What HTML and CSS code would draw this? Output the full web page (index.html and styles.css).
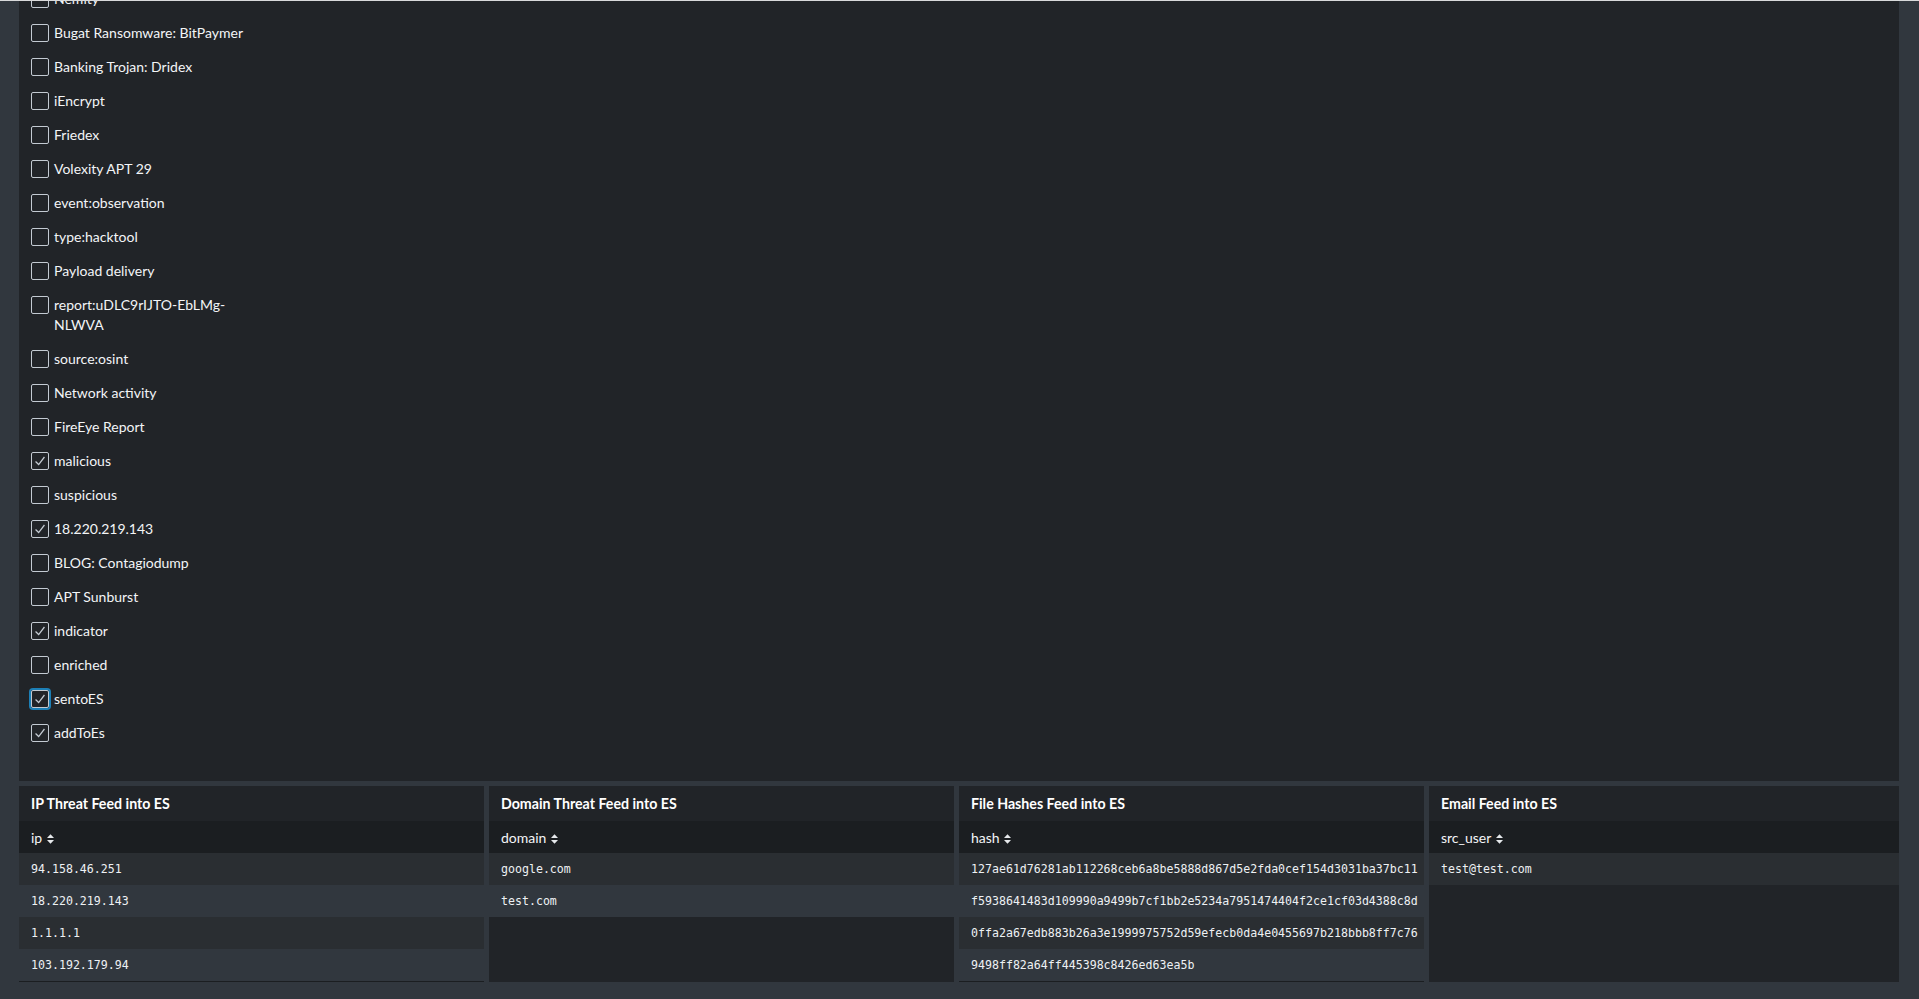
FILE: index.html
```html
<!DOCTYPE html>
<html>
<head>
<meta charset="utf-8">
<link rel="stylesheet" href="styles.css">
</head>
<body>
<div class="topline"></div>
<div class="page">
  <section class="filter-panel">
    <ul class="check-list">
      <li class="item"><span class="box"></span><span class="label">Nemity</span></li>
      <li class="item"><span class="box"></span><span class="label">Bugat Ransomware: BitPaymer</span></li>
      <li class="item"><span class="box"></span><span class="label">Banking Trojan: Dridex</span></li>
      <li class="item"><span class="box"></span><span class="label">iEncrypt</span></li>
      <li class="item"><span class="box"></span><span class="label">Friedex</span></li>
      <li class="item"><span class="box"></span><span class="label">Volexity APT 29</span></li>
      <li class="item"><span class="box"></span><span class="label">event:observation</span></li>
      <li class="item"><span class="box"></span><span class="label">type:hacktool</span></li>
      <li class="item"><span class="box"></span><span class="label">Payload delivery</span></li>
      <li class="item"><span class="box"></span><span class="label">report:uDLC9rIJTO-EbLMg-NLWVA</span></li>
      <li class="item"><span class="box"></span><span class="label">source:osint</span></li>
      <li class="item"><span class="box"></span><span class="label">Network activity</span></li>
      <li class="item"><span class="box"></span><span class="label">FireEye Report</span></li>
      <li class="item"><span class="box checked"><svg viewBox="0 0 18 18"><polyline points="4,9.5 7.5,13 14,4.5"/></svg></span><span class="label">malicious</span></li>
      <li class="item"><span class="box"></span><span class="label">suspicious</span></li>
      <li class="item"><span class="box checked"><svg viewBox="0 0 18 18"><polyline points="4,9.5 7.5,13 14,4.5"/></svg></span><span class="label">18.220.219.143</span></li>
      <li class="item"><span class="box"></span><span class="label">BLOG: Contagiodump</span></li>
      <li class="item"><span class="box"></span><span class="label">APT Sunburst</span></li>
      <li class="item"><span class="box checked"><svg viewBox="0 0 18 18"><polyline points="4,9.5 7.5,13 14,4.5"/></svg></span><span class="label">indicator</span></li>
      <li class="item"><span class="box"></span><span class="label">enriched</span></li>
      <li class="item"><span class="box checked focused"><svg viewBox="0 0 18 18"><polyline points="4,9.5 7.5,13 14,4.5"/></svg></span><span class="label">sentoES</span></li>
      <li class="item"><span class="box checked"><svg viewBox="0 0 18 18"><polyline points="4,9.5 7.5,13 14,4.5"/></svg></span><span class="label">addToEs</span></li>
    </ul>
  </section>

  <section class="tables">
    <div class="table-panel">
      <div class="title">IP Threat Feed into ES</div>
      <table>
        <thead><tr><th>ip <svg class="sort" viewBox="0 0 8 11"><path d="M4 0 L8 4.3 H0 Z M0 6.7 H8 L4 11 Z"/></svg></th></tr></thead>
        <tbody>
          <tr><td>94.158.46.251</td></tr>
          <tr><td>18.220.219.143</td></tr>
          <tr><td>1.1.1.1</td></tr>
          <tr><td>103.192.179.94</td></tr>
        </tbody>
      </table>
    </div>
    <div class="table-panel">
      <div class="title">Domain Threat Feed into ES</div>
      <table>
        <thead><tr><th>domain <svg class="sort" viewBox="0 0 8 11"><path d="M4 0 L8 4.3 H0 Z M0 6.7 H8 L4 11 Z"/></svg></th></tr></thead>
        <tbody class="no-border">
          <tr><td>google.com</td></tr>
          <tr><td>test.com</td></tr>
        </tbody>
      </table>
    </div>
    <div class="table-panel">
      <div class="title">File Hashes Feed into ES</div>
      <table>
        <thead><tr><th>hash <svg class="sort" viewBox="0 0 8 11"><path d="M4 0 L8 4.3 H0 Z M0 6.7 H8 L4 11 Z"/></svg></th></tr></thead>
        <tbody>
          <tr><td>127ae61d76281ab112268ceb6a8be5888d867d5e2fda0cef154d3031ba37bc11</td></tr>
          <tr><td>f5938641483d109990a9499b7cf1bb2e5234a7951474404f2ce1cf03d4388c8d</td></tr>
          <tr><td>0ffa2a67edb883b26a3e1999975752d59efecb0da4e0455697b218bbb8ff7c76</td></tr>
          <tr><td>9498ff82a64ff445398c8426ed63ea5b</td></tr>
        </tbody>
      </table>
    </div>
    <div class="table-panel wide">
      <div class="title">Email Feed into ES</div>
      <table>
        <thead><tr><th>src_user <svg class="sort" viewBox="0 0 8 11"><path d="M4 0 L8 4.3 H0 Z M0 6.7 H8 L4 11 Z"/></svg></th></tr></thead>
        <tbody class="no-border">
          <tr><td>test@test.com</td></tr>
        </tbody>
      </table>
    </div>
  </section>
</div>
</body>
</html>
```

FILE: styles.css
```css
* { box-sizing: border-box; }

html, body {
  margin: 0;
  padding: 0;
  height: 100%;
}

body {
  background: #31373e;
  color: #ffffff;
  font-family: Lato, "Open Sans", sans-serif;
  font-size: 14px;
  overflow: hidden;
}

.topline {
  height: 1px;
  background: #d9dadb;
}

.page {
  padding: 0 20px 0 19px;
  display: flex;
  flex-direction: column;
  gap: 5px;
}

.filter-panel {
  background: #212428;
  height: 780px;
  overflow: hidden;
}

.check-list {
  list-style: none;
  margin: -12px 0 0 0;
  padding: 0 0 0 12px;
  width: 236px;
}

.item {
  display: flex;
  align-items: flex-start;
  gap: 5px;
  margin-bottom: 14px;
  line-height: 20px;
}

.box {
  flex: none;
  width: 18px;
  height: 18px;
  margin-top: 1px;
  border: 1px solid #c3cad2;
  border-radius: 2px;
  display: flex;
  align-items: center;
  justify-content: center;
}

.box svg {
  width: 16px;
  height: 16px;
  fill: none;
  stroke: #c3cad2;
  stroke-width: 1.4;
}

.box.focused {
  border-color: #c3cad2;
  box-shadow: 0 0 0 2px #1c7fb6;
}

.label {
  color: #f3f5f7;
  min-width: 0;
  overflow-wrap: break-word;
}

.tables {
  display: flex;
  gap: 5px;
  height: 196px;
}

.table-panel {
  flex: 0 0 465px;
  background: #212428;
  display: flex;
  flex-direction: column;
}

.table-panel.wide {
  flex: 1 1 0;
}

.title {
  height: 35px;
  line-height: 35px;
  padding-left: 12px;
  font-weight: 700;
  font-size: 14.2px;
  color: #ffffff;
}

table {
  width: 100%;
  border-collapse: collapse;
}

th {
  background: #1b1e21;
  height: 32px;
  text-align: left;
  padding: 0 0 0 12px;
  font-weight: 400;
  font-size: 14px;
  color: #f3f5f7;
}

.sort {
  width: 7px;
  height: 10px;
  fill: #e6e9ec;
  vertical-align: -1px;
  margin-left: 1px;
}

td {
  height: 32px;
  padding: 0 0 0 12px;
  font-family: "DejaVu Sans Mono", "Liberation Mono", monospace;
  font-size: 11.6px;
  color: #eef1f4;
  white-space: nowrap;
}

tbody tr:nth-child(odd) td {
  background: #2a2e32;
}

tbody tr:nth-child(even) td {
  background: #31373e;
}

tbody tr:last-child td {
  border-bottom: 1px solid #1b1e21;
}

tbody.no-border tr:last-child td {
  border-bottom: none;
}
```
